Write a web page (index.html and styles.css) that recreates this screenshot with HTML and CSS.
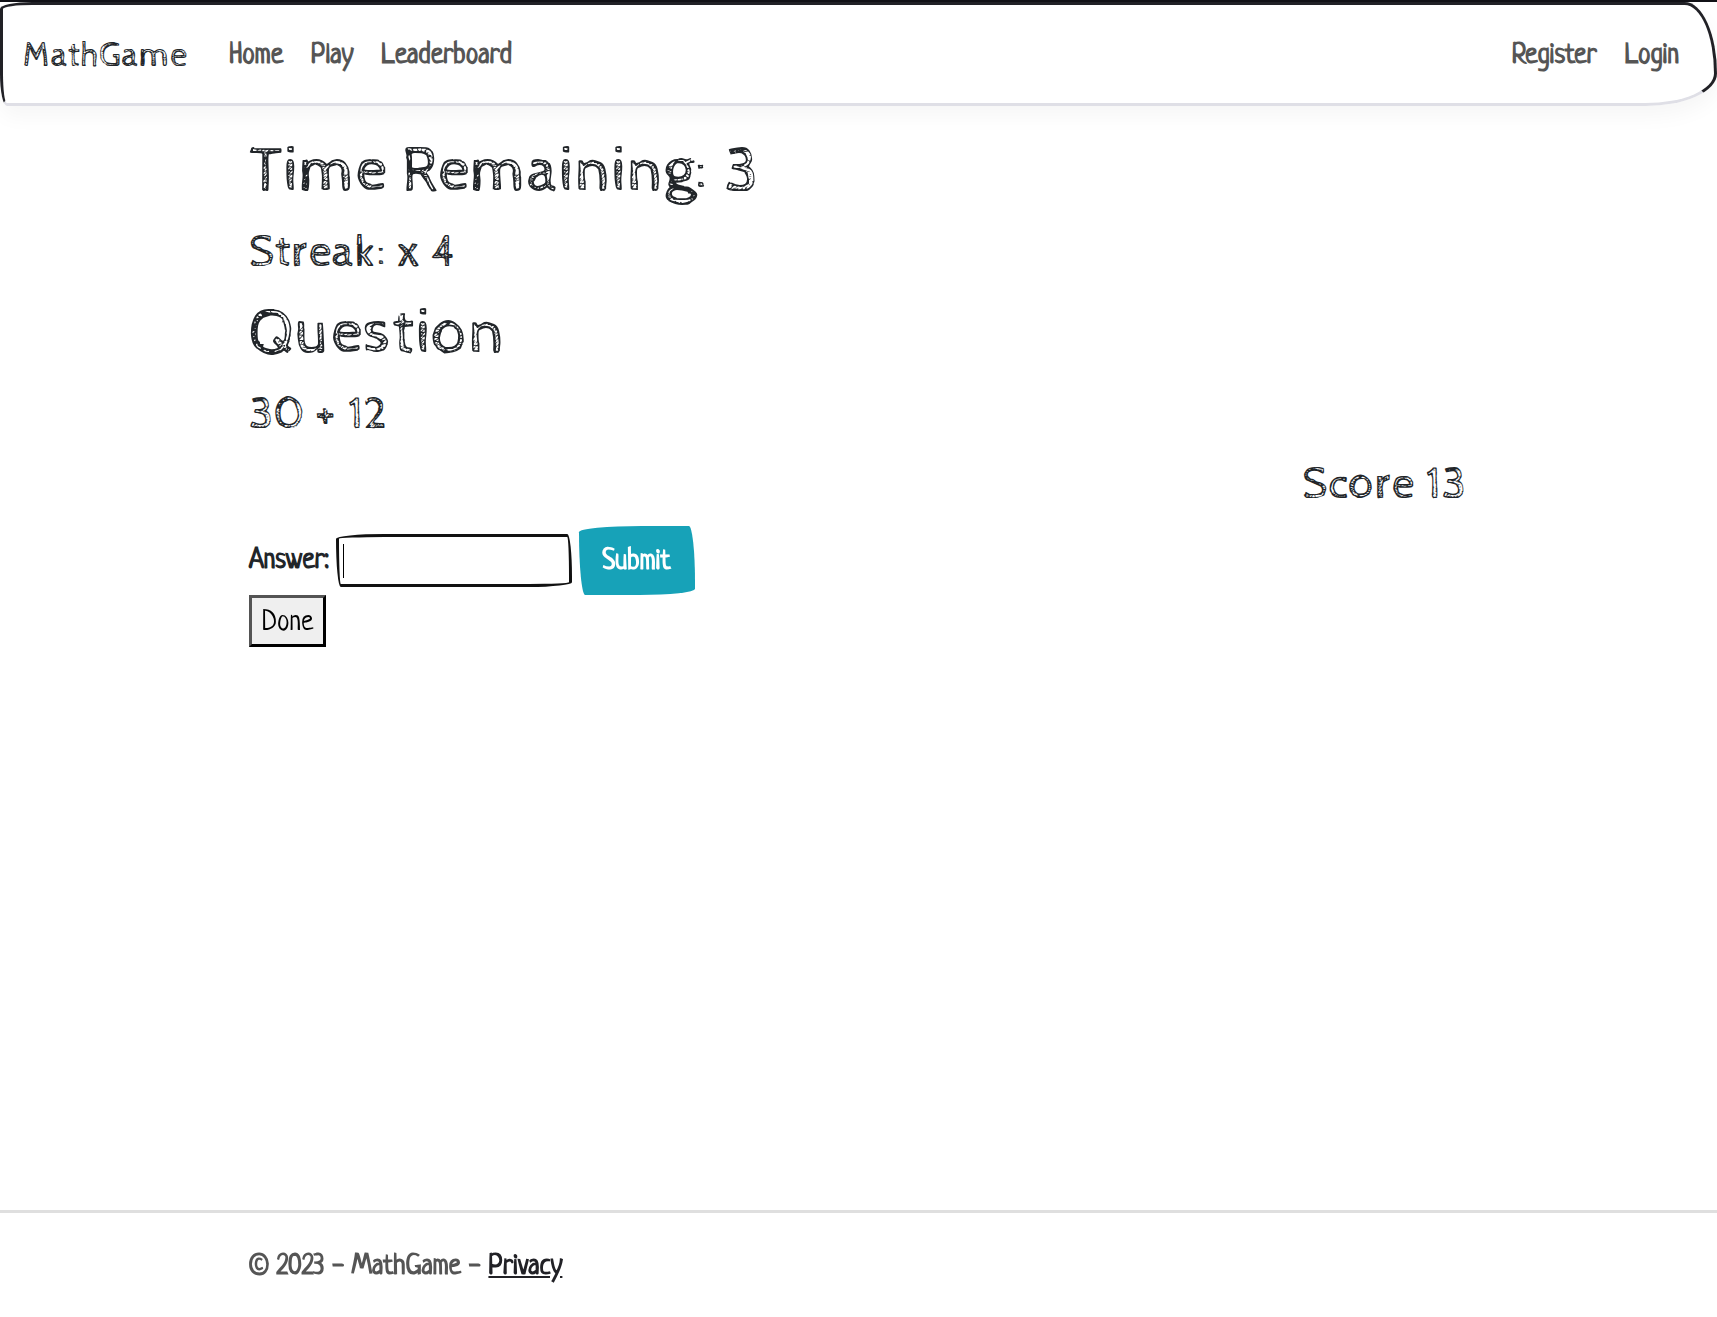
FILE: index.html
```html
<!DOCTYPE html>
<html lang="en">
<head>
<meta charset="utf-8">
<meta name="viewport" content="width=device-width, initial-scale=1">
<title>MathGame</title>
<link rel="stylesheet" href="styles.css">
</head>
<body>
<header>
<nav class="navbar">
<a class="brand sketch" href="#">MathGame</a>
<ul class="nav-list">
<li><a href="#">Home</a></li>
<li><a href="#">Play</a></li>
<li><a href="#">Leaderboard</a></li>
</ul>
<ul class="nav-list account">
<li><a href="#">Register</a></li>
<li><a href="#">Login</a></li>
</ul>
</nav>
</header>
<main class="container">
<h1 class="sketch">Time Remaining: 3</h1>
<h2 class="sketch">Streak: x 4</h2>
<h1 class="sketch">Question</h1>
<h2 class="sketch">30 + 12</h2>
<h2 class="sketch score">Score 13</h2>
<form class="answer-form">
<label for="answer">Answer:</label>
<input id="answer" type="text" autocomplete="off" autofocus>
<button class="submit" type="button">Submit</button>
</form>
<button class="done" type="button">Done</button>
</main>
<footer class="footer">
<div class="container">© 2023 - MathGame - <a href="#">Privacy</a></div>
</footer>
</body>
</html>
```
FILE: styles.css
```css
* {
  box-sizing: border-box;
}

body {
  margin: 0;
  min-height: 100vh;
  display: flex;
  flex-direction: column;
  border-top: 2px solid #111116;
  background: #fff;
  color: #212529;
  font-family: Neucha, Lato, sans-serif;
  font-size: 28px;
  line-height: 42px;
}

.navbar {
  display: flex;
  align-items: center;
  min-height: 104px;
  padding: 3px 35px 0 20px;
  border: 3px solid #212126;
  border-bottom-color: #dfdfe6;
  border-radius: 33px 33px 73px 7px / 7px 73px 33px 33px;
  box-shadow: 0 10px 21px rgba(0, 0, 0, 0.04);
}

.navbar a {
  color: #555;
  text-decoration: none;
}

.sketch {
  font-family: "Cabin Sketch", Lato, sans-serif;
  font-weight: 400;
}

.navbar .brand {
  margin-right: 42px;
  color: #212529;
  font-size: 35px;
}

.nav-list {
  display: flex;
  gap: 28px;
  margin: 0;
  padding: 0;
  list-style: none;
  font-weight: 700;
}

.account {
  margin-left: auto;
}

.container {
  width: 71%;
  margin: 0 auto;
}

main {
  flex: 1;
  padding-top: 26px;
}

h1,
h2 {
  margin: 0 0 12px;
}

h1 {
  font-size: 64px;
  line-height: 80px;
}

h2 {
  font-size: 46px;
  line-height: 58px;
}

.score {
  padding-right: 2px;
  text-align: right;
}

.answer-form {
  display: flex;
  align-items: center;
  gap: 7px;
}

.answer-form label {
  font-weight: 700;
}

input,
.submit {
  border-radius: 255px 25px 225px 25px / 25px 225px 25px 255px;
}

input {
  width: 236px;
  height: 53px;
  padding: 1px 5px;
  border: 3px solid #111;
  outline: 0;
  background: #fff linear-gradient(#000, #000) 4px center / 1px 34px no-repeat;
  caret-color: transparent;
  color: #111;
  font: inherit;
}

.submit {
  padding: 15px 24px 12px;
  border: 0;
  background: #17a2b8;
  color: #fff;
  font: inherit;
  font-weight: 700;
}

.done {
  padding: 4px 10px 0;
  border: 3px outset #000;
  background: #efefef;
  color: #000;
  font: inherit;
}

.footer {
  padding: 33px 0 29px;
  border-top: 3px solid #dfdfdf;
  color: #555;
  font-weight: 700;
}

.footer a {
  color: #212126;
}
```
